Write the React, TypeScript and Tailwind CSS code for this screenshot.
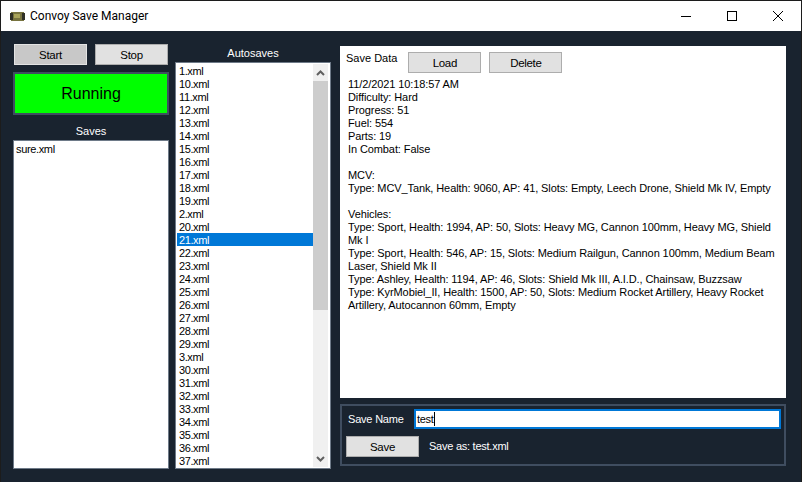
import React from "react";

const files = ["1","10","11","12","13","14","15","16","17","18","19","2","20","21","22","23","24","25","26","27","28","29","3","30","31","32","33","34","35","36","37"];

function Btn({ label, className = "" }: { label: string; className?: string }) {
  return (
    <button className={`flex items-center justify-center w-[73px] h-[21px] pt-px border border-[#adadad] bg-[#e1e1e1] text-[11.5px] tracking-[-0.3px] text-black ${className}`}>
      {label}
    </button>
  );
}

export default function App() {
  return (
    <div className="w-[802px] h-[482px] overflow-hidden flex flex-col bg-[#19232f] border-t border-x border-[#1c1c1c] text-[11px] leading-[13px] text-black" style={{ fontFamily: '"Liberation Sans", Arial, sans-serif' }}>
      <div className="h-[30px] shrink-0 bg-white flex items-center pl-[9px]">
        <svg width="15" height="11" viewBox="0 0 15 11" className="mr-[5px]">
          <rect x="1" y="1" width="13" height="9" fill="#77733f" />
          <rect x="0" y="2" width="3" height="7" fill="#2f2f26" />
          <rect x="12" y="2" width="3" height="7" fill="#2f2f26" />
          <rect x="4" y="3" width="6" height="4" fill="#a8a35a" />
        </svg>
        <span className="text-[12px] text-black" style={{ fontFamily: 'Roboto, sans-serif' }}>Convoy Save Manager</span>
        <div className="ml-auto flex items-center h-full">
          <div className="w-[46px] flex justify-center"><svg width="10" height="10" viewBox="0 0 10 10"><path d="M0 5.5H10" stroke="#000" /></svg></div>
          <div className="w-[46px] flex justify-center"><svg width="10" height="10" viewBox="0 0 10 10"><rect x="0.5" y="0.5" width="9" height="9" fill="none" stroke="#000" /></svg></div>
          <div className="w-[46px] flex justify-center"><svg width="10" height="10" viewBox="0 0 10 10"><path d="M0 0L10 10M10 0L0 10" stroke="#000" /></svg></div>
        </div>
      </div>
      <div className="flex-1 flex pl-[12px] pt-[13px]">
        <div className="w-[156px] flex flex-col">
          <div className="flex gap-[8px] pl-[1px]">
            <Btn label="Start" className="bg-[#c8c8c8]! border-[#e3e3e3]!" />
            <Btn label="Stop" />
          </div>
          <div className="mt-[7px] h-[43px] border-2 border-[#3f4d60] bg-[#00ff00] flex items-center justify-center text-[16px]">Running</div>
          <div className="mt-[10px] h-[15px] text-center text-white">Saves</div>
          <div className="h-[329px] bg-white border border-[#6e7a88] px-[2px] pt-[2px] tracking-[-0.35px]">sure.xml</div>
        </div>
        <div className="ml-[6px] w-[156px] flex flex-col">
          <div className="h-[18px] text-center text-white pt-[3px]">Autosaves</div>
          <div className="h-[407px] bg-white border border-[#6e7a88] flex p-[1px] pr-[2px]">
            <div className="flex-1 overflow-hidden tracking-[-0.4px]">
              {files.map((f) => (
                <div key={f} className={`h-[13px] pl-[2px] pt-px ${f === "21" ? "bg-[#0078d7] text-white" : ""}`}>{f}.xml</div>
              ))}
            </div>
            <div className="w-[15px] bg-[#f0f0f0] flex flex-col">
              <div className="h-[17px] flex items-center justify-center">
                <svg width="9" height="6" viewBox="0 0 9 6"><path d="M1 5L4.5 1.5L8 5" fill="none" stroke="#606060" strokeWidth="2" /></svg>
              </div>
              <div className="h-[229px] bg-[#cdcdcd]" />
              <div className="mt-auto h-[17px] flex items-center justify-center">
                <svg width="9" height="6" viewBox="0 0 9 6"><path d="M1 1L4.5 4.5L8 1" fill="none" stroke="#606060" strokeWidth="2" /></svg>
              </div>
            </div>
          </div>
        </div>
        <div className="ml-[9px] w-[446px] flex flex-col mt-[2px]">
          <div className="h-[352px] bg-white flex flex-col">
            <div className="flex pl-[6px] pt-[6px]">
              <span className="h-[15px]">Save Data</span>
              <Btn label="Load" className="ml-[11px]" />
              <Btn label="Delete" className="ml-[8px]" />
            </div>
            <div className="pl-[8px] pt-[5px] tracking-[-0.1px]">
              <p>11/2/2021 10:18:57 AM</p>
              <p>Difficulty: Hard</p>
              <p>Progress: 51</p>
              <p>Fuel: 554</p>
              <p>Parts: 19</p>
              <p>In Combat: False</p>
              <p className="h-[13px]" />
              <p>MCV:</p>
              <p>Type: MCV_Tank, Health: 9060, AP: 41, Slots: Empty, Leech Drone, Shield Mk IV, Empty</p>
              <p className="h-[13px]" />
              <p>Vehicles:</p>
              <p>Type: Sport, Health: 1994, AP: 50, Slots: Heavy MG, Cannon 100mm, Heavy MG, Shield Mk I</p>
              <p>Type: Sport, Health: 546, AP: 15, Slots: Medium Railgun, Cannon 100mm, Medium Beam Laser, Shield Mk II</p>
              <p>Type: Ashley, Health: 1194, AP: 46, Slots: Shield Mk III, A.I.D., Chainsaw, Buzzsaw</p>
              <p>Type: KyrMobiel_II, Health: 1500, AP: 50, Slots: Medium Rocket Artillery, Heavy Rocket Artillery, Autocannon 60mm, Empty</p>
            </div>
          </div>
          <div className="mt-[6px] h-[62px] border-2 border-[#3f4d60] flex flex-col pl-[4px] pr-[3px] pt-[3px] text-white">
            <div className="flex items-center h-[20px]">
              <span className="ml-[2px] w-[66px] tracking-[-0.2px]">Save Name</span>
              <div className="flex-1 h-[20px] bg-white border-2 border-[#0078d7] text-black flex items-center pl-px tracking-[-0.3px]">
                test<span className="w-px h-[14px] bg-black" />
              </div>
            </div>
            <div className="flex items-center mt-[7px]">
              <Btn label="Save" />
              <span className="ml-[10px] tracking-[-0.25px]">Save as: test.xml</span>
            </div>
          </div>
        </div>
      </div>
    </div>
  );
}
